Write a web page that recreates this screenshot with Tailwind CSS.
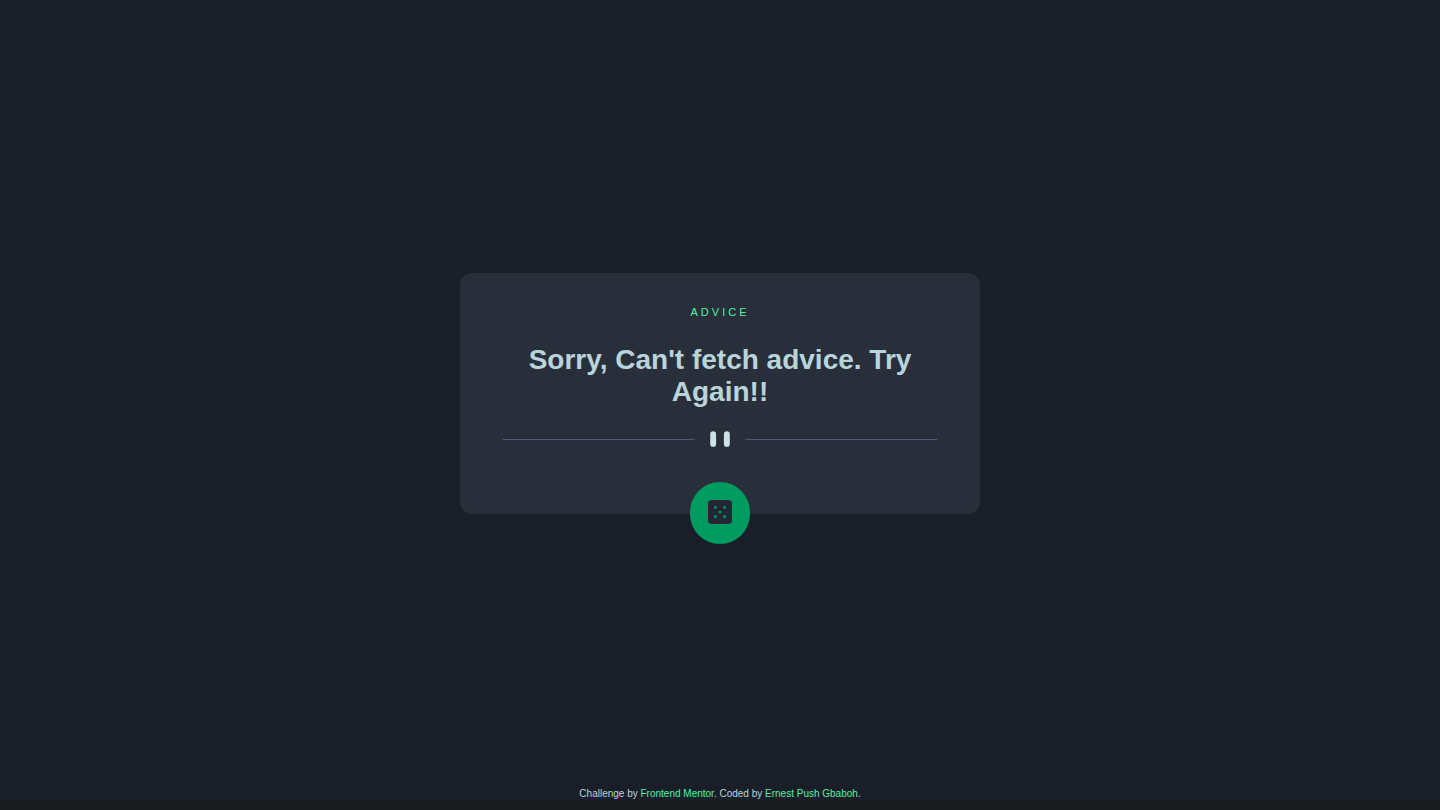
<!DOCTYPE html>
<html lang="en">
<head>
<meta charset="utf-8">
<meta name="viewport" content="width=device-width, initial-scale=1">
<title>Advice generator</title>
<script src="https://cdn.jsdelivr.net/npm/@tailwindcss/browser@4"></script>
</head>
<body class="flex min-h-screen flex-col bg-[#1a1e28] font-['Liberation_Sans',Arial,sans-serif] text-[#b9d5dc]">
  <main class="flex flex-1 flex-col items-center justify-center px-4 pb-0.5">
    <section class="flex w-full max-w-[520px] flex-col items-center rounded-xl bg-[#292f3a] px-[43px] pt-[31px] text-center">
      <p class="text-[11px] leading-4 tracking-[3px] text-[#52f2a2]">ADVICE</p>
      <h1 class="mt-6 text-[28px] leading-8 font-bold">Sorry, Can't fetch advice. Try Again!!</h1>
      <svg class="mt-[23px] h-4 w-full" viewBox="0 0 444 16" aria-hidden="true">
        <path fill="#4f5d74" d="M0 8h196v1H0zM248 8h196v1H248z"/>
        <g transform="translate(212)" fill="#cee3e9"><rect width="6" height="16" rx="3"/><rect x="14" width="6" height="16" rx="3"/></g>
      </svg>
      <button type="button" aria-label="New advice" class="mt-[35px] -mb-[30px] flex h-[62px] w-[60px] justify-center rounded-full bg-[#009b60] pt-[18px]">
        <svg width="24" height="24" viewBox="0 0 24 24" aria-hidden="true">
          <rect width="24" height="24" rx="4" fill="#202733"/>
          <g fill="#009b60"><circle cx="7.5" cy="7.5" r="1.5"/><circle cx="16.5" cy="7.5" r="1.5"/><circle cx="12" cy="12" r="1.5"/><circle cx="7.5" cy="16.5" r="1.5"/><circle cx="16.5" cy="16.5" r="1.5"/></g>
        </svg>
      </button>
    </section>
  </main>
  <footer class="border-b-10 border-[#1a1b1d] text-center text-[10px] leading-3">
    Challenge by <a href="#" class="text-[#52f2a2]">Frontend Mentor</a>. Coded by <a href="#" class="text-[#52f2a2]">Ernest Push Gbaboh</a>.
  </footer>
</body>
</html>
